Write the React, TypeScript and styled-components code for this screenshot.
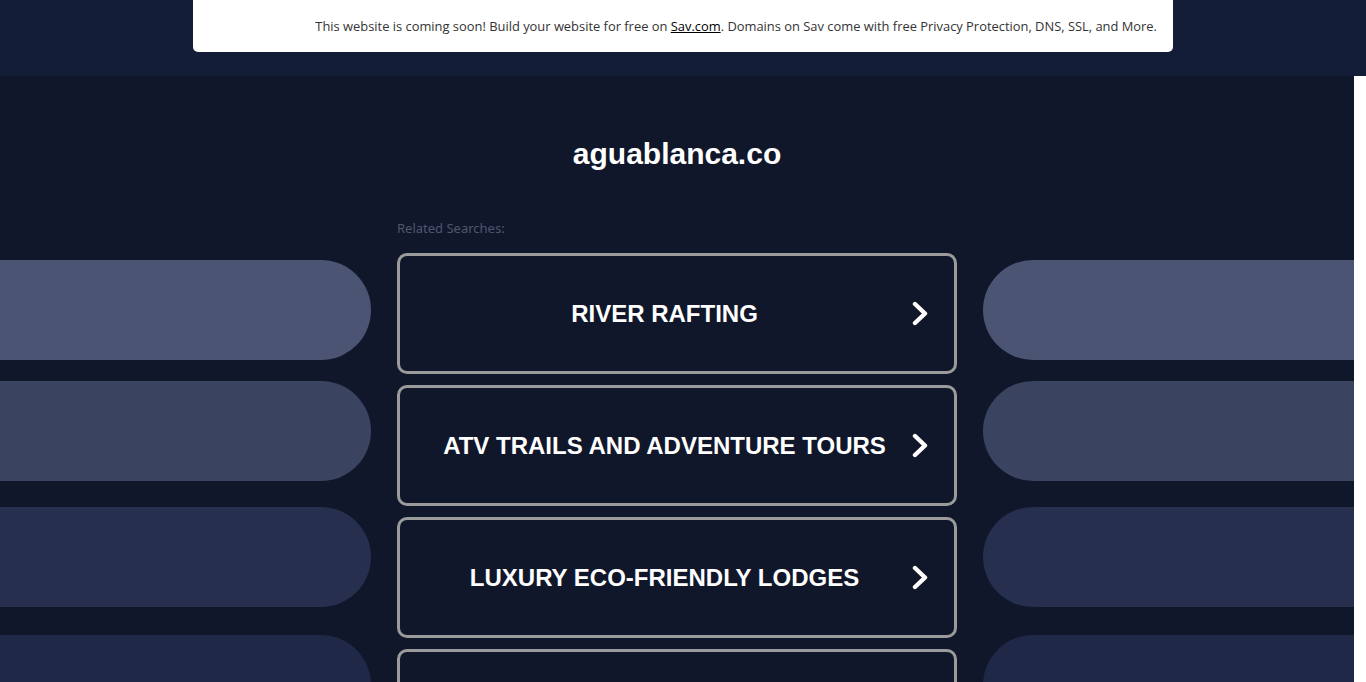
import React from 'react'
import styled, { createGlobalStyle } from 'styled-components'

const GlobalStyle = createGlobalStyle`
  html, body {
    margin: 0;
    padding: 0;
    background: #ffffff;
  }
  body {
    font-family: "Noto Sans", "Open Sans", sans-serif;
    overflow: hidden;
  }
`

const TopBand = styled.header`
  height: 76px;
  background: #131d38;
  display: flex;
  justify-content: center;
`

const Notice = styled.div`
  width: 980px;
  height: 52px;
  box-sizing: border-box;
  background: #ffffff;
  border-radius: 0 0 5px 5px;
  display: flex;
  align-items: center;
  justify-content: flex-end;
  padding: 0 16px 1px 0;
  font-family: "Open Sans", "Noto Sans", sans-serif;
  font-size: 12.9px;
  color: #333333;

  a {
    color: #000000;
    text-decoration: underline;
  }
`

const Main = styled.main`
  width: 1354px;
  height: 606px;
  background: #11172b;
  overflow: hidden;
  padding-top: 60px;
  box-sizing: border-box;
`

const Domain = styled.h1`
  margin: 0 0 48px;
  text-align: center;
  font-family: "Liberation Sans", Arial, sans-serif;
  font-weight: 700;
  font-size: 30px;
  line-height: 36px;
  color: #ffffff;
`

const Columns = styled.div`
  display: grid;
  grid-template-columns: 371px 560px 371px;
  column-gap: 26px;
`

const Side = styled.div<{ $right?: boolean }>`
  display: flex;
  flex-direction: column;
  padding-top: 40px;
  align-items: ${(p) => (p.$right ? 'flex-start' : 'flex-end')};
`

const Pill = styled.div<{ $shade: string; $gap: number }>`
  width: 440px;
  height: 100px;
  flex-shrink: 0;
  margin-top: ${(p) => p.$gap}px;
  border-radius: 50px;
  background: ${(p) => p.$shade};
`

const Center = styled.section`
  display: flex;
  flex-direction: column;
`

const Label = styled.div`
  font-size: 13px;
  line-height: 16px;
  color: #4f566e;
  margin-bottom: 17px;
`

const List = styled.div`
  display: flex;
  flex-direction: column;
  gap: 11px;
`

const Result = styled.a`
  height: 121px;
  box-sizing: border-box;
  border: 3px solid #9b9b9b;
  border-radius: 10px;
  display: flex;
  align-items: center;
  padding: 0 26px 0 20px;
  color: #ffffff;
  text-decoration: none;
`

const ResultText = styled.span`
  flex: 1;
  text-align: center;
  font-family: "Liberation Sans", Arial, sans-serif;
  font-weight: 700;
  font-size: 24px;
  text-transform: uppercase;
`

const Chevron = styled.svg`
  width: 16px;
  height: 25px;
  margin-left: 3px;
  flex-shrink: 0;
`

const searches = [
  'River Rafting',
  'ATV Trails and Adventure Tours',
  'Luxury Eco-Friendly Lodges',
  'Bird Watching Tours',
]

const pills = [
  { shade: '#4b5573', gap: 0 },
  { shade: '#3a4360', gap: 21 },
  { shade: '#262f4e', gap: 26 },
  { shade: '#1f2947', gap: 28 },
]

const App = () => (
  <>
    <GlobalStyle />
    <TopBand>
      <Notice>
        <span>
          This website is coming soon! Build your website for free on{' '}
          <a href="#">Sav.com</a>. Domains on Sav come with free Privacy
          Protection, DNS, SSL, and More.
        </span>
      </Notice>
    </TopBand>
    <Main>
      <Domain>aguablanca.co</Domain>
      <Columns>
        <Side>
          {pills.map((p, i) => (
            <Pill key={i} $shade={p.shade} $gap={p.gap} />
          ))}
        </Side>
        <Center>
          <Label>Related Searches:</Label>
          <List>
            {searches.map((s) => (
              <Result key={s} href="#">
                <ResultText>{s}</ResultText>
                <Chevron viewBox="0 0 16 25">
                  <path
                    d="M3 3 L13 12.5 L3 22"
                    fill="none"
                    stroke="#ffffff"
                    strokeWidth="4.4"
                    strokeLinecap="round"
                    strokeLinejoin="round"
                  />
                </Chevron>
              </Result>
            ))}
          </List>
        </Center>
        <Side $right>
          {pills.map((p, i) => (
            <Pill key={i} $shade={p.shade} $gap={p.gap} />
          ))}
        </Side>
      </Columns>
    </Main>
  </>
)

export default App
